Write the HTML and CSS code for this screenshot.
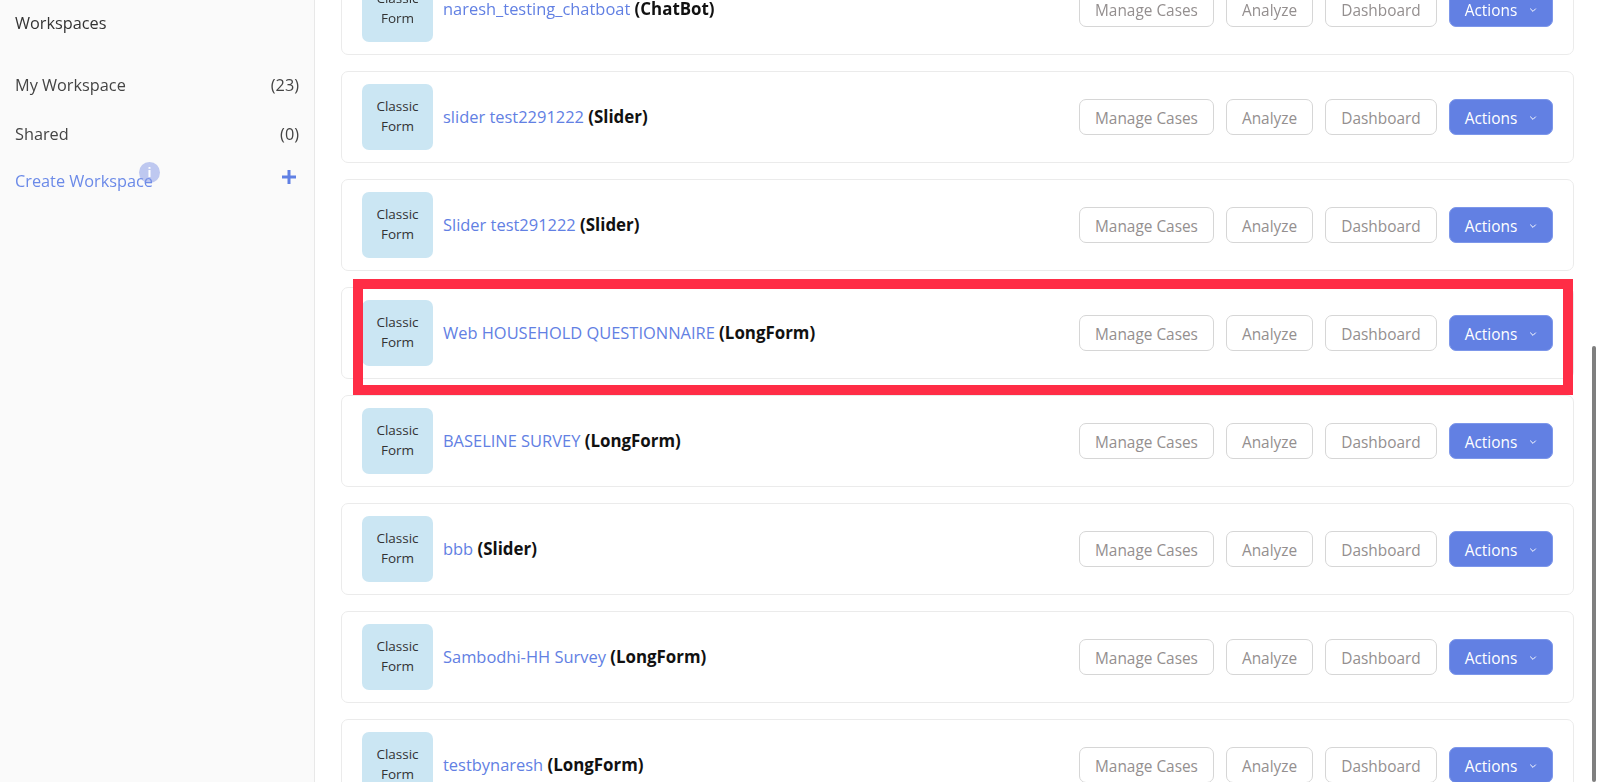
FILE: index.html
```html
<!DOCTYPE html>
<html lang="en">
<head>
<meta charset="utf-8">
<title>Workspaces</title>
<link rel="stylesheet" href="styles.css">
</head>
<body>
<div class="shell">
  <aside class="sidebar">
    <h2 class="side-title">Workspaces</h2>
    <div class="side-row side-row-first"><span>My Workspace</span><span>(23)</span></div>
    <div class="side-row side-row-shared"><span>Shared</span><span>(0)</span></div>
    <div class="side-create">
      <span>Create Workspace</span>
      <svg class="plus" viewBox="0 0 14 14" width="14" height="14"><path d="M7 0v14M0 7h14" stroke="#6080e4" stroke-width="3"/></svg>
      <span class="info">i</span>
    </div>
  </aside>
  <main class="list">
    <article class="card"><div class="thumb">Classic<br>Form</div><div class="title"><a>naresh_testing_chatboat</a> <b>(ChatBot)</b></div><div class="btns"><button class="btn btn-manage">Manage Cases</button><button class="btn btn-analyze">Analyze</button><button class="btn btn-dash">Dashboard</button><button class="btn btn-actions">Actions<svg viewBox="0 0 8 6" width="8" height="6"><path d="M1.2 1.6l2.8 2.8 2.8-2.8" fill="none" stroke="#fff" stroke-width="1"/></svg></button></div></article>
    <article class="card"><div class="thumb">Classic<br>Form</div><div class="title"><a>slider test2291222</a> <b>(Slider)</b></div><div class="btns"><button class="btn btn-manage">Manage Cases</button><button class="btn btn-analyze">Analyze</button><button class="btn btn-dash">Dashboard</button><button class="btn btn-actions">Actions<svg viewBox="0 0 8 6" width="8" height="6"><path d="M1.2 1.6l2.8 2.8 2.8-2.8" fill="none" stroke="#fff" stroke-width="1"/></svg></button></div></article>
    <article class="card"><div class="thumb">Classic<br>Form</div><div class="title"><a>Slider test291222</a> <b>(Slider)</b></div><div class="btns"><button class="btn btn-manage">Manage Cases</button><button class="btn btn-analyze">Analyze</button><button class="btn btn-dash">Dashboard</button><button class="btn btn-actions">Actions<svg viewBox="0 0 8 6" width="8" height="6"><path d="M1.2 1.6l2.8 2.8 2.8-2.8" fill="none" stroke="#fff" stroke-width="1"/></svg></button></div></article>
    <article class="card"><div class="thumb">Classic<br>Form</div><div class="title"><a>Web HOUSEHOLD QUESTIONNAIRE</a> <b>(LongForm)</b></div><div class="btns"><button class="btn btn-manage">Manage Cases</button><button class="btn btn-analyze">Analyze</button><button class="btn btn-dash">Dashboard</button><button class="btn btn-actions">Actions<svg viewBox="0 0 8 6" width="8" height="6"><path d="M1.2 1.6l2.8 2.8 2.8-2.8" fill="none" stroke="#fff" stroke-width="1"/></svg></button></div></article>
    <article class="card"><div class="thumb">Classic<br>Form</div><div class="title"><a>BASELINE SURVEY</a> <b>(LongForm)</b></div><div class="btns"><button class="btn btn-manage">Manage Cases</button><button class="btn btn-analyze">Analyze</button><button class="btn btn-dash">Dashboard</button><button class="btn btn-actions">Actions<svg viewBox="0 0 8 6" width="8" height="6"><path d="M1.2 1.6l2.8 2.8 2.8-2.8" fill="none" stroke="#fff" stroke-width="1"/></svg></button></div></article>
    <article class="card"><div class="thumb">Classic<br>Form</div><div class="title"><a>bbb</a> <b>(Slider)</b></div><div class="btns"><button class="btn btn-manage">Manage Cases</button><button class="btn btn-analyze">Analyze</button><button class="btn btn-dash">Dashboard</button><button class="btn btn-actions">Actions<svg viewBox="0 0 8 6" width="8" height="6"><path d="M1.2 1.6l2.8 2.8 2.8-2.8" fill="none" stroke="#fff" stroke-width="1"/></svg></button></div></article>
    <article class="card"><div class="thumb">Classic<br>Form</div><div class="title"><a>Sambodhi-HH Survey</a> <b>(LongForm)</b></div><div class="btns"><button class="btn btn-manage">Manage Cases</button><button class="btn btn-analyze">Analyze</button><button class="btn btn-dash">Dashboard</button><button class="btn btn-actions">Actions<svg viewBox="0 0 8 6" width="8" height="6"><path d="M1.2 1.6l2.8 2.8 2.8-2.8" fill="none" stroke="#fff" stroke-width="1"/></svg></button></div></article>
    <article class="card"><div class="thumb">Classic<br>Form</div><div class="title"><a>testbynaresh</a> <b>(LongForm)</b></div><div class="btns"><button class="btn btn-manage">Manage Cases</button><button class="btn btn-analyze">Analyze</button><button class="btn btn-dash">Dashboard</button><button class="btn btn-actions">Actions<svg viewBox="0 0 8 6" width="8" height="6"><path d="M1.2 1.6l2.8 2.8 2.8-2.8" fill="none" stroke="#fff" stroke-width="1"/></svg></button></div></article>
  </main>
  <div class="highlight"></div>
  <div class="scrollbar"></div>
</div>
</body>
</html>
```
FILE: styles.css
```css
* { box-sizing: border-box; }
html, body { margin: 0; height: 100%; }
body { background: #fff; font-family: "Open Sans", sans-serif; color: #333; overflow: hidden; }
.shell { position: relative; display: flex; width: 1600px; height: 782px; overflow: hidden; filter: blur(.35px); }
.sidebar { width: 315px; flex: none; height: 100%; background: #fafafa; border-right: 1px solid #e8e8e8; padding: 12px 15px 0 15px; font-size: 16.3px; }
.side-title { margin: 0; font-size: 16.3px; font-weight: 400; line-height: 22px; color: #333; }
.side-row { display: flex; justify-content: space-between; line-height: 22px; color: #444; }
.side-row-first { margin-top: 40px; }
.side-row-shared { margin-top: 27px; }
.side-create { position: relative; display: flex; justify-content: space-between; margin-top: 25px; line-height: 22px; color: #6b8ae8; }
.plus { margin: 0 3px 0 0; }
.info { position: absolute; left: 124px; top: -8px; width: 21px; height: 21px; border-radius: 50%; background: rgba(130,150,230,.5); color: #fff; font-size: 13px; font-weight: 700; line-height: 21px; text-align: center; }
.list { flex: 1; min-width: 0; margin-top: -37.5px; padding: 0 26px 0 26px; display: flex; flex-direction: column; gap: 16px; }
.card { flex: none; display: flex; align-items: center; height: 92px; padding: 0 20px 0 20px; background: #fff; border: 1.5px solid #ebebeb; border-radius: 7px; }
.thumb { flex: none; display: flex; align-items: center; justify-content: center; text-align: center; width: 71px; height: 66px; padding-bottom: 2px; border-radius: 7px; background: #cbe6f3; color: #333; font-size: 13.5px; line-height: 20px; }
.title { flex: 1; min-width: 0; margin: 0 0 0 10px; font-size: 16.45px; line-height: 22px; }
.title a { color: #6280e3; }
.title b { color: #111; font-weight: 700; font-size: 16.9px; }
.btns { flex: none; display: flex; gap: 12px; }
.btn { height: 36px; padding: 3px 0 0; border-radius: 7px; border: 1.5px solid #d6d6d6; background: #fff; color: #948f8f; font-family: inherit; font-size: 15.4px; }
.btn-manage { width: 135px; }
.btn-analyze { width: 87px; }
.btn-dash { width: 112px; }
.btn-actions { width: 104px; background: #6280e3; border-color: #7d97ea; color: #fff; display: flex; align-items: center; justify-content: center; gap: 12px; }
.highlight { position: absolute; left: 353px; top: 279px; width: 1220px; height: 116px; border: 10px solid #ff2d46; }
.scrollbar { position: absolute; left: 1592px; top: 346px; width: 4px; height: 436px; border-radius: 2px; background: #7f7f7f; }
```
